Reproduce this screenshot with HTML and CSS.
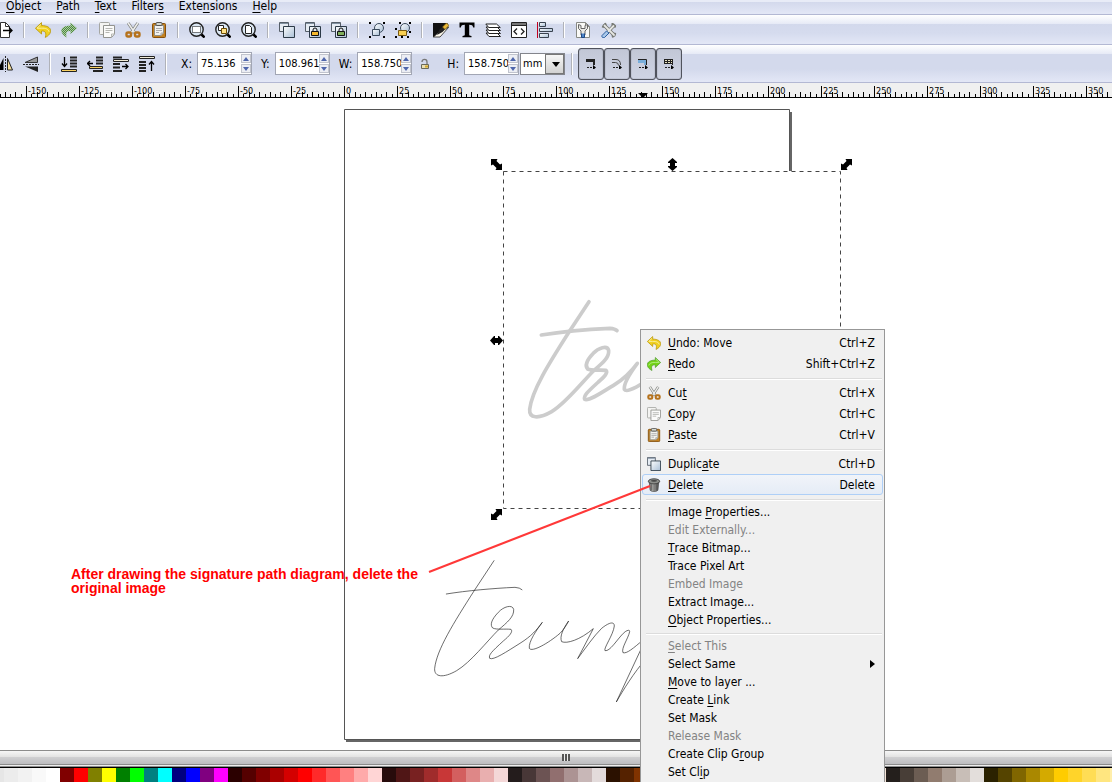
FILE: index.html
```html
<!DOCTYPE html>
<html lang="en">
  <head>
    <meta charset="UTF-8" />
    <meta name="viewport" content="width=device-width, initial-scale=1.0" />
    <title>Drawing editor</title>
    <link rel="stylesheet" href="styles.css">
  </head>
  <body>
    <!-- shared icons -->
    <svg class="defs" aria-hidden="true">
      <defs>
        <linearGradient id="blue" x1="0" y1="0" x2="1" y2="1">
          <stop offset="0" stop-color="#fdfefe" />
          <stop offset="1" stop-color="#a9bfd6" />
        </linearGradient>
        <linearGradient id="metal" x1="0" x2="1">
          <stop offset="0" stop-color="#555" />
          <stop offset=".4" stop-color="#c4c4c0" />
          <stop offset="1" stop-color="#3c3c3c" />
        </linearGradient>
        <pattern id="stipple" width="2" height="2" patternUnits="userSpaceOnUse">
          <rect width="2" height="2" fill="#a9c9a4" />
          <rect width="1" height="1" fill="#4f8b3c" />
          <rect x="1" y="1" width="1" height="1" fill="#4f8b3c" />
        </pattern>
        <symbol id="undo" viewBox="0 0 16 16">
          <path d="M6.500.6.400 6.300l6.100 5.700V9c3.500-.3 5.200 1.500 3.800 6.400C17.500 12 18.500 3.800 6.500 3.500z" fill="#f0d020" stroke="#b89400" stroke-linejoin="round" stroke-width=".8" />
          <path d="M5.800 2.600 2 6.200h4.500c4-.3 7 1 7.500 3.500" fill="none" stroke="#fbf0a0" />
        </symbol>
        <symbol id="redo" viewBox="0 0 16 16">
          <path d="M9.500.6 15.600 6.300 9.500 12V9C6 8.700 4.300 10.500 5.700 15.400-1.500 12-2.500 3.800 9.500 3.500z" fill="#73d216" stroke="#4e9a2e" stroke-linejoin="round" stroke-width=".8" />
          <path d="M10.200 2.600 14 6.200H9.500c-4-.3-7 1-7.500 3.500" fill="none" stroke="#b5ef87" />
        </symbol>
        <symbol id="redo-off" viewBox="0 0 16 16">
          <path d="M9.500.6 16 6.300 9.500 12V9C6 8.700 4.300 10.500 5.700 15.400-1.500 12-2.500 3.800 9.500 3.500z" fill="url(#stipple)" />
        </symbol>
        <symbol id="cut" viewBox="0 0 16 16">
          <path d="M3.200 1 9.800 11M12.800 1 6.200 11" stroke="#7b7e7a" stroke-width="3" />
          <path d="M3.200 1 9.800 11M12.800 1 6.200 11" stroke="#eeeeec" stroke-width="1.500" />
          <rect x="1.500" y="10.500" width="4.500" height="4" rx="1.500" fill="none" stroke="#b5721c" stroke-width="2.400" />
          <rect x="10" y="10.500" width="4.500" height="4" rx="1.500" fill="none" stroke="#b5721c" stroke-width="2.400" />
        </symbol>
        <symbol id="copy" viewBox="0 0 16 16">
          <rect x=".5" y=".5" width="10" height="12" rx="1" fill="#f4f4f2" stroke="#a5a6a2" />
          <path d="M4.500 3.500h11V12l-3 3.500h-8z" fill="#fbfbfa" stroke="#92938f" />
          <path d="M12.500 15.500V12h3M6.500 6.500h7M6.500 8.500h7M6.500 10.500h4" fill="none" stroke="#b5b6b2" />
        </symbol>
        <symbol id="paste" viewBox="0 0 16 16">
          <rect x="1.500" y="1.500" width="13" height="14" rx="1" fill="#c4811f" stroke="#85500c" />
          <path d="M3.500 3.500h9V11l-2.500 2.500H3.500z" fill="#f2f2ef" stroke="#8f8f87" />
          <path d="M5 6.500h6M5 8.500h6M5 10.500h3M10 13.500V11h2.500" fill="none" stroke="#aaa" />
          <rect x="5" y=".5" width="6" height="3" rx="1" fill="#d3d7cf" stroke="#555" />
        </symbol>
        <symbol id="duplicate" viewBox="0 0 16 16">
          <path d="M.5.5h9v9h-9z" fill="#e6ecf3" stroke="#555e68" />
          <path d="M1 1.500h8" stroke="#8090a0" />
          <path d="M4.500 4.500h11v11h-11z" fill="url(#blue)" stroke="#2c3a47" />
        </symbol>
        <symbol id="trash" viewBox="0 0 16 16">
          <path d="M2.500 4 3.500 14c1.500 2 7.500 2 9 0l1-10z" fill="url(#metal)" stroke="#444" stroke-width=".7" />
          <path d="M5.500 7v7M8 7v8M10.500 7v7" stroke="#555" />
          <ellipse cx="8" cy="3.800" rx="6.500" ry="2.900" fill="#8d8f8b" stroke="#3c3c3c" />
          <ellipse cx="8" cy="3.200" rx="3.500" ry="1" fill="#444" />
        </symbol>
        <symbol id="glass" viewBox="0 0 16 16">
          <path d="m12 12 2.700 2.700" stroke="#000" stroke-width="2.600" stroke-linecap="round" />
          <circle cx="7.500" cy="7.500" r="6.700" fill="#dbe7f3" stroke="#222" stroke-width="1.400" />
        </symbol>
      </defs>
    </svg>

    <nav class="menubar">
      <button><u>O</u>bject</button>
      <button><u>P</u>ath</button>
      <button><u>T</u>ext</button>
      <button>Filter<u>s</u></button>
      <button>Exte<u>n</u>sions</button>
      <button><u>H</u>elp</button>
    </nav>

    <div class="toolbar commands">
      <button class="tool" aria-label="Export"><svg viewBox="0 0 16 16"><path d="M3.500.5h5l4 4v11h-9z" fill="#fff" stroke="#333" /><path d="M8.500.5v4h4" fill="none" stroke="#333" /><path d="M6 8.500h9M12 5.500l3 3-3 3" fill="none" stroke="#000" stroke-width="1.300" /></svg></button>
      <i class="sep"></i>
      <button class="tool" aria-label="Undo"><svg><use href="#undo" /></svg></button>
      <button class="tool" aria-label="Redo"><svg><use href="#redo-off" /></svg></button>
      <i class="sep"></i>
      <button class="tool" aria-label="Copy"><svg><use href="#copy" /></svg></button>
      <button class="tool" aria-label="Cut"><svg><use href="#cut" /></svg></button>
      <button class="tool" aria-label="Paste"><svg><use href="#paste" /></svg></button>
      <i class="sep"></i>
      <button class="tool" aria-label="Zoom selection"><svg viewBox="0 0 16 16"><use href="#glass" /><rect x="3.500" y="4.500" width="8" height="6" fill="#fff" stroke="#000" stroke-dasharray="1 1" /></svg></button>
      <button class="tool" aria-label="Zoom drawing"><svg viewBox="0 0 16 16"><use href="#glass" /><path d="M3.500 3.500h5v5h-5z" fill="#fff" stroke="#222" /><path d="M6.500 6.500h5v5h-5z" fill="#ffe28a" stroke="#6b4a00" /></svg></button>
      <button class="tool" aria-label="Zoom page"><svg viewBox="0 0 16 16"><use href="#glass" /><path d="M4.500 3.500h4l2 2v6h-6z" fill="#fff" stroke="#222" /></svg></button>
      <i class="sep"></i>
      <button class="tool" aria-label="Duplicate"><svg><use href="#duplicate" /></svg></button>
      <button class="tool" aria-label="Clone"><svg viewBox="0 0 16 16"><use href="#duplicate" /><path d="M8 10V8a2 2 0 0 1 4 0v2" fill="none" stroke="#111" /><path d="M6.500 9.500h7v4h-7z" fill="#f5b82e" stroke="#111" /></svg></button>
      <button class="tool" aria-label="Unlink clone"><svg viewBox="0 0 16 16"><use href="#duplicate" /><path d="M8 9V8a2 2 0 0 1 4 0v2" fill="none" stroke="#111" /><path d="M6.500 9.500h7v4h-7z" fill="#7fae5a" stroke="#111" /></svg></button>
      <i class="sep"></i>
      <button class="tool" aria-label="Group"><svg viewBox="0 0 16 16"><circle cx="10" cy="6" r="4.500" fill="url(#blue)" stroke="#3a4a5c" /><path d="M3.500 7.500h7v6h-7z" fill="url(#blue)" stroke="#3a4a5c" /><path d="M0 0h2v2H0zM14 0h2v2h-2zM0 14h2v2H0zM14 14h2v2h-2z" /></svg></button>
      <button class="tool" aria-label="Ungroup"><svg viewBox="0 0 16 16"><circle cx="10" cy="6" r="4.500" fill="url(#blue)" stroke="#3a4a5c" /><path d="M3.500 8.500h8v5h-8z" fill="#f8cf52" stroke="#7a5a10" /><path d="M4 0h2v2H4zM14 0h2v2h-2zM14 9h2v2h-2zM0 6h2v2H0zM0 14h2v2H0zM6 14h2v2H6zM12 14h2v2h-2z" /></svg></button>
      <i class="sep"></i>
      <button class="tool" aria-label="Fill and stroke"><svg viewBox="0 0 16 16"><path d="M0 1h15L1 15H0z" fill="#111" /><path d="M15.500 5v.500L7 15H.5L6 10z" fill="#fbf7ea" stroke="#222" stroke-width=".8" /><path d="M13.500 1 16 3.500 9.500 10 4 13l2.500-5.500z" fill="#222" /><path d="M13.500 1 16 3.500l-4 4L9.500 5z" fill="#e9b83a" stroke="#6a4a00" stroke-width=".6" /></svg></button>
      <button class="tool" aria-label="Text and font"><svg viewBox="0 0 16 16"><path d="M.5.500h15V5.500h-1.300C13.800 3.500 13 2.800 10.200 2.800v9.700c0 1 .5 1.300 2.300 1.500v1.200h-9V14c1.800-.2 2.300-.5 2.300-1.500V2.800C3 2.800 2.200 3.500 1.800 5.500H.5z" /></svg></button>
      <button class="tool" aria-label="Layers"><svg viewBox="0 0 16 16"><g fill="#fff" stroke="#222"><path d="m1 11 3 3.500h11.500L12 11z" /><path d="m1 8 3 3.500h11.500L12 8z" /><path d="m1 5 3 3.500h11.500L12 5z" /><path d="m.8 2 3 3.500h11.500L11.500 2z" /></g></svg></button>
      <button class="tool" aria-label="XML editor"><svg viewBox="0 0 16 16"><path d="M.5.500h15v15H.5z" fill="#fff" stroke="#222" /><path d="M1 2h14" stroke="#777" stroke-width="2" /><path d="M1 3.500h14" stroke="#222" /><path d="m6 6.500-3 3 3 3M10 6.500l3 3-3 3" fill="none" stroke="#222" stroke-width="1.300" /></svg></button>
      <button class="tool" aria-label="Align"><svg viewBox="0 0 16 16"><path d="M.5 0v16" stroke="#c00020" /><g fill="url(#blue)" stroke="#39424e"><path d="M2.500.5h6v4h-6z" /><path d="M2.500 6.500h13v3h-13z" /><path d="M2.500 11.500h9v4h-9z" /></g></svg></button>
      <i class="sep"></i>
      <button class="tool" aria-label="Document properties"><svg viewBox="0 0 16 16"><path d="M1.500.5h9l4 4v11h-13z" fill="#fafaf7" stroke="#888a85" /><path d="M10.500.5v4h4" fill="none" stroke="#888a85" /><path d="M3.500 2.500v4L6 9v4h4V9l2.500-2.500v-4l-2.500 1v3H6v-3z" fill="#e9e9e5" stroke="#666" /><path d="M6.500 11.500v4h3v-4" fill="#4c85c8" stroke="#204a87" /></svg></button>
      <button class="tool" aria-label="Preferences"><svg viewBox="0 0 16 16"><path d="m3.500 3.500 9.500 9.500" stroke="#6f726d" stroke-width="3.400" stroke-linecap="round" /><path d="M1 4.500 3.500 5 5 3.500 4 1M15 12 12.500 11.500 11.500 13l.5 2.500M11.500 1v3.500H15" fill="none" stroke="#777a75" stroke-width="2" /><path d="m14 2.500-7 7" stroke="#777a75" stroke-width="3.400" /><path d="m3.500 3.500 9.500 9.500M12.500 4 7 9.500" stroke="#e6e7e3" stroke-width="1.800" stroke-linecap="round" /><path d="M1 13.500 5.500 9 8 11l-4.500 4.500c-2 .5-3-.5-2.500-2z" fill="#a9c8ea" stroke="#2c5d9e" /></svg></button>
    </div>

    <div class="toolbar controls">
      <button class="tool" aria-label="Flip horizontal"><svg viewBox="0 0 16 16"><path d="M6.500 2v12H.5z" /><path d="M8.500 0v16" stroke="#222" stroke-dasharray="2 1" /><path d="M10.500 2.500 15.500 14h-5z" fill="#f3dc9a" stroke="#222" /></svg></button>
      <button class="tool" aria-label="Flip vertical"><svg viewBox="0 0 16 16"><path d="M14.500 1v5.500H2z" fill="#999" stroke="#333" /><path d="M0 8.500h16" stroke="#222" stroke-dasharray="2 1" /><path d="M15 10.500V16L2 10.500z" fill="#222" /></svg></button>
      <i class="sep tall"></i>
      <button class="tool" aria-label="Lower to bottom"><svg viewBox="0 0 16 16"><path d="M3.500 1v9M1 7.500l2.500 3 2.500-3" fill="none" stroke="#000" stroke-width="1.300" /><path d="M9 1.500h7M9 4.500h7M9 7.500h7M9 10.500h7" stroke="#222" stroke-width="2" /><path d="M.5 13.500h15v2H.5z" fill="#f8d060" stroke="#222" /></svg></button>
      <button class="tool" aria-label="Lower"><svg viewBox="0 0 16 16"><path d="M0 7.500h6M3 5 .5 7.500 3 10" fill="none" stroke="#000" stroke-width="1.300" /><path d="M9 1.500h7M9 4.500h7M9 7.500h7M6 15h10" stroke="#222" stroke-width="2" /><path d="M2.500 10.500h13v2h-13z" fill="#f8d060" stroke="#222" /></svg></button>
      <button class="tool" aria-label="Raise"><svg viewBox="0 0 16 16"><path d="M9 10.500h6M12.500 8l2.500 2.500-2.500 2.500" fill="none" stroke="#000" stroke-width="1.300" /><path d="M0 1.500h9M0 8h7M0 11.500h7M0 15h9" stroke="#222" stroke-width="2" /><path d="M.5 3.500h15v2H.5z" fill="#f2ecd8" stroke="#222" /></svg></button>
      <button class="tool" aria-label="Raise to top"><svg viewBox="0 0 16 16"><path d="M12.500 15V6M10 8.500l2.500-3 2.500 3" fill="none" stroke="#000" stroke-width="1.300" /><path d="M0 6h7M0 9h7M0 12h7M0 15h7" stroke="#222" stroke-width="2" /><path d="M.5.500h15v2H.5z" fill="#f2ecd8" stroke="#222" /></svg></button>
      <i class="sep tall"></i>

      <label class="field" for="pos-x">X:</label>
      <div class="spin"><input id="pos-x" type="text" value="75.136"><div class="steps"><button aria-label="Increase X"></button><button class="down" aria-label="Decrease X"></button></div></div>
      <label class="field" for="pos-y">Y:</label>
      <div class="spin"><input id="pos-y" type="text" value="108.961"><div class="steps"><button aria-label="Increase Y"></button><button class="down" aria-label="Decrease Y"></button></div></div>
      <label class="field" for="size-w">W:</label>
      <div class="spin"><input id="size-w" type="text" value="158.750"><div class="steps"><button aria-label="Increase width"></button><button class="down" aria-label="Decrease width"></button></div></div>
      <button class="tool lock" aria-label="Lock ratio"><svg viewBox="0 0 10 12"><path d="M2 4c0-3.500 5-3.500 5 0v2" fill="none" stroke="#777" stroke-width="1.300" /><path d="M1.500 6.500h7v4h-7z" fill="#e9dfb4" stroke="#6c6a58" /><path d="M5 7.500h3v2H5z" fill="#d5a92c" /></svg></button>
      <label class="field" for="size-h">H:</label>
      <div class="spin"><input id="size-h" type="text" value="158.750"><div class="steps"><button aria-label="Increase height"></button><button class="down" aria-label="Decrease height"></button></div></div>
      <div class="unit">
        <select aria-label="Unit">
          <option>mm</option>
          <option>px</option>
        </select>
      </div>
      <i class="sep tall"></i>
      <button class="toggle" aria-label="Scale stroke width"><svg viewBox="0 0 10 10"><path d="M0 0h9v6H7V3H0z" fill="#222" /><path d="M1 8.500h7" stroke="#222" stroke-dasharray="2 1" /><path d="m7 6 3 2.500L7 11z" /></svg></button>
      <button class="toggle" aria-label="Scale rounded corners"><svg viewBox="0 0 10 10"><path d="M0 .5h4q4.500 0 4.500 5.500M0 3.500h3.500q3 0 3 3" fill="none" stroke="#444" /><path d="M1 8.500h7" stroke="#222" stroke-dasharray="2 1" /><path d="m7 6 3 2.500L7 11z" /></svg></button>
      <button class="toggle" aria-label="Move gradients"><svg viewBox="0 0 10 10"><path d="M0 1h9v5H6V4H0z" fill="#79aedb" /><path d="M0 .5h8.500V6" fill="none" stroke="#222" /><path d="M1 8.500h7" stroke="#222" stroke-dasharray="2 1" /><path d="m7 6 3 2.500L7 11z" /></svg></button>
      <button class="toggle" aria-label="Move patterns"><svg viewBox="0 0 10 10"><path d="M0 .5h9v4H0z" fill="#e8e2c0" /><path d="M0 .5h9M0 4.500h9M.5 0v5M3.500 0v5M6.500 0v5M8.500 0v6M0 2.500h9" stroke="#222" /><path d="M1 8.500h7" stroke="#222" stroke-dasharray="2 1" /><path d="m7 6 3 2.500L7 11z" /></svg></button>
    </div>

    <svg class="ruler" id="ruler">
      <defs>
        <pattern id="ticks" x="26" width="53" height="15" patternUnits="userSpaceOnUse">
          <path d="M.5 3v12M11.500 9v6M21.500 9v6M32.500 9v6M42.500 9v6M5.500 11v4M16.500 11v4M27.500 11v4M37.500 11v4M48.500 11v4" stroke="#000" />
        </pattern>
      </defs>
      <rect width="100%" height="15" fill="url(#ticks)" />
      <path d="M638 10h10l-5 5z" />
    </svg>

    <main class="canvas">
      <svg class="drawing">
        <defs>
          <g id="signature" fill="none" stroke-linecap="round" stroke-linejoin="round">
            <path d="M222 62 164 150C100 250 50 330 44 385c-2 27 26 30 66 7 42-25 90-87 125-122 27-23 48-40 46-62-4-16-31-8-46 9-22 23-25 38-17 47 12 6 37 2 55 4 7 7-5 20-23 35-35 32-45 42-41 52 11 7 51-20 91-45 35-22 50-40 67-63-17 23-42 58-39 78 7 13 57-15 92-45 10-10 18-22 26-37-16 22-28 47-21 62 15 7 55-5 95-39L473 356c27-36 47-66 72-91 25-20 38-20 38-7-3 27-33 67-28 74 15 3 35-32 55-52 10-10 20-12 19-5-4 20-26 50-20 63 11 4 31-13 60-38" />
            <path d="M690 270 589 486c21-36 51-86 90-131" />
            <path d="M79 162c61-10 141-17 206-20q15 1 21 7" />
          </g>
          <path id="arrow" d="M0-6.500 4.500-2.500v1H2.500v3h2v1L0 6.500-4.500 2.500v-1h2v-3h-2v-1z" />
          <path id="arrow-diag" d="M-5.500-5.500H1L0-3.500 3.500 0l2-1v6.500H-1l1-2L-3.500 0l-2 1z" />
        </defs>
        <!-- page sheet with its drop shadow -->
        <path d="M346 642.500h446M790.500 14v628" stroke="#666" stroke-width="3" />
        <path d="M344.500 11.500h445v630h-445z" fill="#fff" stroke="#555" />
        <!-- selected bitmap -->
        <path d="M503 73h338v338H503z" fill="#fff" />
        <use class="ink-photo" href="#signature" transform="translate(515 183) scale(.3333)" />
        <path class="marquee" d="M503.500 73.500h337v337h-337z" />
        <use href="#arrow-diag" x="496.500" y="66.500" />
        <use href="#arrow" x="672.500" y="66.500" />
        <use href="#arrow-diag" transform="translate(846.500 66.500) rotate(90)" />
        <use href="#arrow" transform="translate(496.500 242.500) rotate(90)" />
        <use href="#arrow-diag" transform="translate(496.500 416.500) rotate(90)" />
        <!-- traced path -->
        <use class="ink-path" href="#signature" transform="translate(420 442) scale(.3333)" />
      </svg>
      <p class="note">After drawing the signature path diagram, delete the original image</p>
    </main>

    <div class="scrollbar"><span class="grip"></span></div>
    <div class="palette" id="palette"></div>

    <div class="context-menu" role="menu">
      <button role="menuitem"><svg><use href="#undo" /></svg><span><u>U</u>ndo: Move</span><kbd>Ctrl+Z</kbd></button>
      <button role="menuitem"><svg><use href="#redo" /></svg><span><u>R</u>edo</span><kbd>Shift+Ctrl+Z</kbd></button>
      <hr>
      <button role="menuitem"><svg><use href="#cut" /></svg><span>Cu<u>t</u></span><kbd>Ctrl+X</kbd></button>
      <button role="menuitem"><svg><use href="#copy" /></svg><span><u>C</u>opy</span><kbd>Ctrl+C</kbd></button>
      <button role="menuitem"><svg><use href="#paste" /></svg><span><u>P</u>aste</span><kbd>Ctrl+V</kbd></button>
      <hr>
      <button role="menuitem"><svg><use href="#duplicate" /></svg><span>Duplic<u>a</u>te</span><kbd>Ctrl+D</kbd></button>
      <button role="menuitem" class="active"><svg><use href="#trash" /></svg><span><u>D</u>elete</span><kbd>Delete</kbd></button>
      <hr>
      <button role="menuitem" class="plain">Image <u>P</u>roperties...</button>
      <button role="menuitem" class="plain" disabled>Edit Externally...</button>
      <button role="menuitem" class="plain"><u>T</u>race Bitmap...</button>
      <button role="menuitem" class="plain">Trace Pixel Art</button>
      <button role="menuitem" class="plain" disabled>Embed Image</button>
      <button role="menuitem" class="plain">Extract Image...</button>
      <button role="menuitem" class="plain"><u>O</u>bject Properties...</button>
      <hr>
      <button role="menuitem" class="plain" disabled><u>S</u>elect This</button>
      <button role="menuitem" class="plain submenu">Select Same</button>
      <button role="menuitem" class="plain"><u>M</u>ove to layer ...</button>
      <button role="menuitem" class="plain">Create <u>L</u>ink</button>
      <button role="menuitem" class="plain">Set Mask</button>
      <button role="menuitem" class="plain" disabled>Release Mask</button>
      <button role="menuitem" class="plain">Create Clip G<u>r</u>oup</button>
      <button role="menuitem" class="plain">Set Cl<u>i</u>p</button>
    </div>

    <!-- pointer from the note to the Delete entry -->
    <svg class="pointer"><path d="M429 572 650 486" /></svg>

    <script>
      const colors = [
        "e6e6e6", "ececec", "f2f2f2", "f9f9f9", "ffffff",
        "800000", "ff0000", "808000", "ffff00", "008000", "00ff00",
        "008080", "00ffff", "000080", "0000ff", "800080", "ff00ff",
        "2b0000", "550000", "800000", "aa0000", "d40000", "ff0000",
        "ff2a2a", "ff5555", "ff8080", "ffaaaa", "ffd5d5",
        "280b0b", "501616", "782121", "a02c2c", "c83737", "d35f5f",
        "de8787", "e9afaf", "f4d7d7",
        "241c1c", "483737", "6c5353", "916f6f", "ac9393", "c8b7b7", "e3dbdb",
        "2b1100", "552200", "803300", "aa4400", "d45500", "ff6600",
        "ff7f2a", "ff9955", "ffb380", "ffccaa", "ffe6d5",
        "28170b", "502d16", "784421", "a05a2c", "c87137", "d38d5f",
        "deaa87", "e9c6af", "f4e3d7",
        "241f1c", "483e37", "6c5d53", "917c6f", "ac9d93", "c8beb7", "e3dedb",
        "2b2200", "554400", "806600", "aa8800", "d4aa00", "ffcc00",
        "ffd42a", "ffdd55", "ffe680", "ffeeaa"
      ];
      const palette = document.getElementById("palette");
      colors.forEach((color) => {
        const swatch = document.createElement("span");
        swatch.style.background = "#" + color;
        palette.appendChild(swatch);
      });

      // ruler labels, one every 25 mm
      const ruler = document.getElementById("ruler");
      for (let mm = -150; mm <= 350; mm += 25) {
        const label = document.createElementNS("http://www.w3.org/2000/svg", "text");
        label.setAttribute("x", 346 + (mm / 25) * 53);
        label.setAttribute("y", 11);
        label.textContent = mm;
        ruler.appendChild(label);
      }
    </script>
  </body>
</html>
```

FILE: styles.css
```css
* {
  margin: 0;
  padding: 0;
  box-sizing: border-box;
}
body {
  display: flex;
  flex-direction: column;
  height: 100vh;
  overflow: hidden;
  background: #fff;
  color: #000;
  font: 12px "DejaVu Sans Condensed", "Noto Sans", sans-serif;
}
button,
input,
select,
kbd {
  font: inherit;
  color: inherit;
  border: none;
  background: none;
}
u {
  text-underline-offset: 2px;
}
.defs {
  position: absolute;
  width: 0;
  height: 0;
}

/* menu and toolbars */
.menubar {
  display: flex;
  flex: none;
  align-items: flex-start;
  gap: 15px;
  height: 15px;
  padding-left: 6px;
  background: linear-gradient(#e8ecf7 2px, #d3d9ec 2px, #e3e7f6);
  border-bottom: 1px solid #b3b8d3;
}
.menubar button {
  height: 12px;
  line-height: 12px;
}
.toolbar {
  display: flex;
  flex: none;
  align-items: center;
  border-bottom: 1px solid #b3b8d3;
}
.commands {
  height: 30px;
  padding-right: 8px;
  background: linear-gradient(#fff, #e6eaf6 9px, #d3d9ec 9px, #d5dbee 18px, #e3e7f6);
}
.controls {
  height: 38px;
  background: linear-gradient(#fff, #e6eaf6 9px, #d3d9ec 9px, #d3d9ec 24px, #e3e7f6);
}
.tool {
  display: flex;
  flex: none;
  align-items: center;
  justify-content: center;
  width: 26px;
  height: 26px;
}
.tool:first-child {
  margin-left: -8px;
}
.tool svg {
  width: 16px;
  height: 16px;
}
.sep {
  flex: none;
  width: 2px;
  height: 16px;
  margin: 0 5px;
  background: #b0b2b8;
  border-right: 1px solid #fff;
}
.sep.tall {
  height: 22px;
}
.field {
  margin: 0 5px 0 9px;
}
.spin {
  display: flex;
  flex: none;
  width: 55px;
  height: 23px;
  background: #fff;
  border: 1px solid #a2a6b4;
}
.spin input {
  width: 43px;
  padding-left: 3px;
  font-size: 11px;
}
.steps {
  display: flex;
  flex-direction: column;
  gap: 1px;
  width: 10px;
  padding: 1px 0;
  background: #fff;
}
.steps button {
  flex: 1;
  display: flex;
  align-items: center;
  justify-content: center;
  background: #eceef4;
  border: 1px solid #c0c3cd;
}
.steps button::before {
  content: "";
  border: 3px solid transparent;
  border-top: none;
  border-bottom: 4px solid #4f66ac;
}
.steps .down::before {
  border-top: 4px solid #4f66ac;
  border-bottom: none;
}
.lock svg {
  width: 10px;
  height: 12px;
}
.unit {
  display: flex;
  flex: none;
  align-items: center;
  width: 45px;
  height: 22px;
  margin: 0 1px;
  background: #fff;
  border: 1px solid #83858c;
  position: relative;
}
.unit select {
  appearance: none;
  width: 100%;
  padding-left: 2px;
  font-size: 11px;
}
.unit::after {
  content: "";
  position: absolute;
  top: 0;
  bottom: 0;
  right: 0;
  width: 17px;
  border: 1px solid #777;
  background: linear-gradient(#f6f6f6, #d2d2d2);
  pointer-events: none;
}
.unit::before {
  content: "";
  position: absolute;
  z-index: 1;
  right: 4px;
  top: 8px;
  border: 4px solid transparent;
  border-top: 5px solid #000;
  border-bottom: none;
  pointer-events: none;
}
.toggle {
  display: flex;
  flex: none;
  align-items: center;
  justify-content: center;
  width: 26px;
  height: 32px;
  background: linear-gradient(#c2c7d6, #cfd4e4);
  border: 1px solid #50535d;
  border-radius: 3px;
  box-shadow: inset 0 0 1px #50535d;
}
.toggle svg {
  width: 10px;
  height: 10px;
}

/* ruler and canvas */
.ruler {
  flex: none;
  width: 100%;
  height: 15px;
  background: #f0f0f0;
  border-bottom: 1px solid #000;
}
.ruler text {
  font-size: 9px;
}
.canvas {
  flex: 1;
  min-height: 0;
  position: relative;
}
.drawing {
  display: block;
  width: 100%;
  height: 100%;
}
.marquee {
  fill: none;
  stroke: #444;
  stroke-dasharray: 4 4;
}
.ink-photo {
  stroke: #ccc;
  stroke-width: 11;
}
.ink-path {
  stroke: #222;
  stroke-width: 2;
}
.note {
  position: absolute;
  left: 71px;
  top: 469px;
  width: 360px;
  color: #f00;
  font: bold 14px/14px "Liberation Sans", Arial, sans-serif;
}
.pointer {
  position: fixed;
  inset: 0;
  width: 100%;
  height: 100%;
  pointer-events: none;
  fill: none;
  stroke: #ff3838;
  stroke-width: 2;
}

/* scrollbar and colour palette */
.scrollbar {
  display: flex;
  flex: none;
  align-items: center;
  justify-content: center;
  height: 18px;
  padding: 0 0 3px 20px;
  border-top: 1px solid #8c8c8c;
  border-bottom: 1px solid #000;
  background: linear-gradient(#f6f6f6, #e2e2e2 6px, #d0d0d2 6px, #bdbdc0 13px, #8c8c8c 13px, #8c8c8c 14px, #eee 14px, #eee 15px, #8c8c8c 15px);
}
.grip {
  width: 8px;
  height: 7px;
  background: repeating-linear-gradient(to right, #555 0 2px, #eee 2px 3px);
}
.palette {
  display: flex;
  flex: none;
  height: 14px;
  margin-left: -10px;
  overflow: hidden;
}
.palette span {
  flex: none;
  width: 14px;
}

/* context menu */
.context-menu {
  position: absolute;
  left: 640px;
  top: 329px;
  bottom: 0;
  width: 245px;
  padding: 2px 1px 0;
  background: #f0f0f0;
  border: 1px solid #979797;
  border-bottom: none;
  overflow: hidden;
}
.context-menu button {
  display: flex;
  align-items: center;
  width: 100%;
  height: 21px;
  padding: 0 7px 0 4px;
  border: 1px solid transparent;
  border-radius: 3px;
  text-align: left;
  white-space: pre;
}
.context-menu svg {
  width: 14px;
  height: 14px;
  margin-right: 7px;
}
.context-menu kbd {
  margin-left: auto;
}
.context-menu .plain {
  height: 18px;
  padding-left: 25px;
}
.context-menu button:disabled {
  color: #838383;
}
.context-menu .active {
  background: linear-gradient(#f1f4f9, #e5ecf6);
  border-color: #aecff7;
}
.submenu::after {
  content: "";
  margin-left: auto;
  border: 4px solid transparent;
  border-left: 5px solid #000;
  border-right: none;
}
.context-menu hr {
  height: 2px;
  margin: 4px 1px 2px 4px;
  border: none;
  border-top: 1px solid #dcdcdc;
  background: #fff;
}
```
